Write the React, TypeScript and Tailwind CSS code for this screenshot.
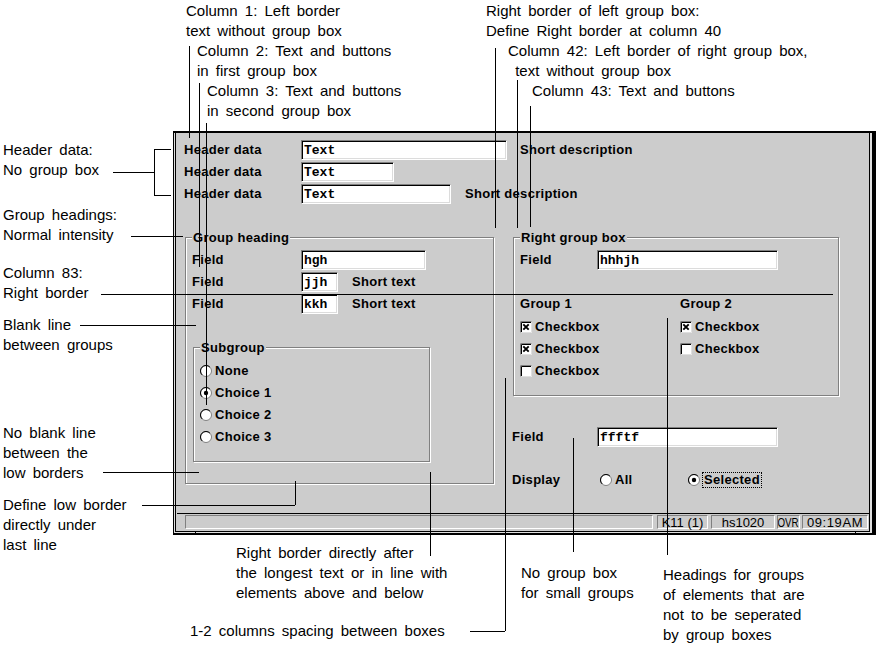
import type { ReactNode } from 'react';

const dlgFont = "font-['Liberation_Sans',Arial,sans-serif] font-bold text-[13px] tracking-[0.3px] text-black";

const Field = ({ w, value }: { w: string; value: string }) => (
  <div
    className={`${w} h-[20px] shrink-0 bg-white border border-t-[#808080] border-l-[#808080] border-r-white border-b-white shadow-[inset_1px_1px_0_#000,inset_-1px_-1px_0_#dcdcdc] pl-[2px] flex items-center font-['Liberation_Mono',monospace] font-bold text-[13px] tracking-normal leading-none`}
  >
    {value}
  </div>
);

const Radio = ({ checked }: { checked?: boolean }) => (
  <svg width="12" height="12" viewBox="0 0 12 12" className="shrink-0">
    <circle cx="6" cy="6" r="5.5" fill="#fff" stroke="#808080" />
    <path d="M2.1 9.9A5.5 5.5 0 0 1 9.9 2.1" fill="none" stroke="#000" />
    {checked && <circle cx="6" cy="6" r="2.2" fill="#000" />}
  </svg>
);

const Check = ({ checked }: { checked?: boolean }) => (
  <svg width="12" height="12" viewBox="0 0 12 12" className="shrink-0">
    <rect x="0" y="0" width="12" height="12" fill="#fff" />
    <path d="M0.5 12V0.5H12" stroke="#808080" fill="none" />
    <path d="M1.5 11V1.5H11" stroke="#000" fill="none" />
    <path d="M11.5 0.5V11.5H0.5" stroke="#dfdfdf" fill="none" />
    {checked && <path d="M3.3 3.3L8.7 8.7M8.7 3.3L3.3 8.7" stroke="#000" strokeWidth="1.9" />}
  </svg>
);

const GroupBox = ({ title, className, children }: { title: string; className: string; children: ReactNode }) => (
  <div className={`relative shrink-0 border border-[#808080] shadow-[inset_1px_1px_0_#fff,1px_1px_0_#fff] ${className}`}>
    <span className="absolute -top-[8px] left-[6px] bg-[#cccccc] px-px leading-[16px]">{title}</span>
    {children}
  </div>
);

const Row = ({ children }: { children: ReactNode }) => <div className="h-[20px] flex items-center">{children}</div>;

const notes = [
  { pos: 'left-[186px] top-[1px]', lines: ['Column 1: Left border', 'text without group box'] },
  { pos: 'left-[197px] top-[41px]', lines: ['Column 2: Text and buttons', 'in first group box'] },
  { pos: 'left-[207px] top-[81px]', lines: ['Column 3: Text and buttons', 'in second group box'] },
  { pos: 'left-[486px] top-[1px]', lines: ['Right border of left group box:', 'Define Right border at column 40'] },
  { pos: 'left-[508px] top-[41px]', lines: ['Column 42: Left border of right group box,', '\u00a0text without group box'] },
  { pos: 'left-[532px] top-[81px]', lines: ['Column 43: Text and buttons'] },
  { pos: 'left-[3px] top-[140px]', lines: ['Header data:', 'No group box'] },
  { pos: 'left-[3px] top-[205px]', lines: ['Group headings:', 'Normal intensity'] },
  { pos: 'left-[3px] top-[263px]', lines: ['Column 83:', 'Right border'] },
  { pos: 'left-[3px] top-[315px]', lines: ['Blank line', 'between groups'] },
  { pos: 'left-[3px] top-[423px]', lines: ['No blank line', 'between the', 'low borders'] },
  { pos: 'left-[3px] top-[495px]', lines: ['Define low border', 'directly under', 'last line'] },
  { pos: 'left-[236px] top-[543px]', lines: ['Right border directly after', 'the longest text or in line with', 'elements above and below'] },
  { pos: 'left-[190px] top-[621px]', lines: ['1-2 columns spacing between boxes'] },
  { pos: 'left-[521px] top-[563px]', lines: ['No group box', 'for small groups'] },
  { pos: 'left-[663px] top-[565px]', lines: ['Headings for groups', 'of elements that are', 'not to be seperated', 'by group boxes'] },
];

// pointer lines of the diagram: [x, y1, y2] and [y, x1, x2]
const vLines = [
  [189, 46, 138], [199, 83, 267], [206, 123, 405], [495, 48, 228], [517, 80, 228], [530, 106, 227],
  [154, 149, 195], [295, 481, 505], [430, 472, 556], [505, 378, 631], [573, 438, 552], [667, 318, 555],
  [195, 531, 534], [855, 531, 534],
];
const hLines = [
  [172, 113, 154], [149, 154, 171], [195, 154, 171], [236, 131, 183], [294, 101, 833],
  [325, 80, 196], [472, 103, 199], [505, 142, 295], [631, 470, 505],
];

const sunken = 'border border-t-[#808080] border-l-[#808080] border-r-white border-b-white';

export default function App() {
  return (
    <div className="relative w-[876px] h-[645px] overflow-hidden bg-white">
      <div className="pl-[173px] pt-[131px]">
        <div className="w-[703px] h-[404px] flex border-l border-t-2 border-r-4 border-b-2 border-black bg-[#dfdfdf] pl-px pr-[2px] pb-px">
          <div className={`flex-1 flex flex-col border-l border-r border-b border-black bg-[#cccccc] pl-px ${dlgFont}`}>
            <div className="flex-1 flex flex-col">
              <div className="pt-[7px] pl-[7px] flex flex-col gap-[2px]">
                <Row>
                  <span className="w-[117px]">Header data</span>
                  <Field w="w-[206px]" value="Text" />
                  <span className="ml-[13px]">Short description</span>
                </Row>
                <Row>
                  <span className="w-[117px]">Header data</span>
                  <Field w="w-[93px]" value="Text" />
                </Row>
                <Row>
                  <span className="w-[117px]">Header data</span>
                  <Field w="w-[150px]" value="Text" />
                  <span className="ml-[14px]">Short description</span>
                </Row>
              </div>

              <div className="mt-[33px] pl-[8px] flex items-start gap-[19px]">
                <GroupBox title="Group heading" className="w-[309px] h-[247px]">
                  <div className="pt-[12px] pl-[6px] flex flex-col gap-[2px]">
                    <Row>
                      <span className="w-[109px]">Field</span>
                      <Field w="w-[125px]" value="hgh" />
                    </Row>
                    <Row>
                      <span className="w-[109px]">Field</span>
                      <Field w="w-[37px]" value="jjh" />
                      <span className="ml-[14px]">Short text</span>
                    </Row>
                    <Row>
                      <span className="w-[109px]">Field</span>
                      <Field w="w-[37px]" value="kkh" />
                      <span className="ml-[14px]">Short text</span>
                    </Row>
                  </div>
                  <GroupBox title="Subgroup" className="mt-[33px] ml-[7px] w-[237px] h-[115px]">
                    <div className="pt-[13px] pl-[6px] flex flex-col gap-[2px]">
                      {['None', 'Choice 1', 'Choice 2', 'Choice 3'].map((c) => (
                        <Row key={c}>
                          <Radio checked={c === 'Choice 1'} />
                          <span className="ml-[3px]">{c}</span>
                        </Row>
                      ))}
                    </div>
                  </GroupBox>
                </GroupBox>

                <div className="flex flex-col">
                  <GroupBox title="Right group box" className="w-[326px] h-[159px]">
                    <div className="pt-[12px] pl-[6px]">
                      <Row>
                        <span className="w-[77px]">Field</span>
                        <Field w="w-[181px]" value="hhhjh" />
                      </Row>
                      <div className="mt-[24px] flex">
                        <div className="w-[160px] flex flex-col gap-[2px]">
                          <div className="h-[20px] mb-px flex items-center">Group 1</div>
                          <Row><Check checked /><span className="ml-[3px]">Checkbox</span></Row>
                          <Row><Check checked /><span className="ml-[3px]">Checkbox</span></Row>
                          <Row><Check /><span className="ml-[3px]">Checkbox</span></Row>
                        </div>
                        <div className="flex flex-col gap-[2px]">
                          <div className="h-[20px] mb-px flex items-center">Group 2</div>
                          <Row><Check checked /><span className="ml-[3px]">Checkbox</span></Row>
                          <Row><Check /><span className="ml-[3px]">Checkbox</span></Row>
                        </div>
                      </div>
                    </div>
                  </GroupBox>
                  <div className="mt-[31px] -ml-px h-[20px] flex items-center">
                    <span className="w-[85px]">Field</span>
                    <Field w="w-[181px]" value="ffftf" />
                  </div>
                  <div className="mt-[23px] -ml-px h-[20px] flex items-center">
                    <span className="w-[88px]">Display</span>
                    <div className="w-[88px] flex items-center">
                      <Radio />
                      <span className="ml-[3px]">All</span>
                    </div>
                    <div className="flex items-center">
                      <Radio checked />
                      <span className="ml-[2px] border border-dotted border-black px-px leading-[14px]">Selected</span>
                    </div>
                  </div>
                </div>
              </div>
            </div>

            <div className="h-[18px] border-t border-black pt-px pb-[2px] pl-[8px] pr-px flex font-normal tracking-normal text-[13px] leading-none">
              <div className={`flex-1 ${sunken}`} />
              <div className={`ml-[4px] w-[51px] flex items-center justify-center ${sunken}`}>K11 (1)</div>
              <div className={`ml-[3px] w-[64px] flex items-center justify-center ${sunken}`}>hs1020</div>
              <div className={`ml-[2px] w-[23px] flex items-center justify-center overflow-hidden ${sunken}`}>
                <span className="inline-block scale-x-[0.75]">OVR</span>
              </div>
              <div className={`ml-[2px] w-[66px] flex items-center justify-center tracking-[0.6px] ${sunken}`}>09:19AM</div>
            </div>
          </div>
        </div>
      </div>

      <svg className="absolute inset-0 pointer-events-none" width="876" height="645" shapeRendering="crispEdges">
        {vLines.map(([x, y1, y2], i) => (
          <line key={`v${i}`} x1={x + 0.5} y1={y1} x2={x + 0.5} y2={y2} stroke="#000" />
        ))}
        {hLines.map(([y, x1, x2], i) => (
          <line key={`h${i}`} x1={x1} y1={y + 0.5} x2={x2} y2={y + 0.5} stroke="#000" />
        ))}
      </svg>

      {notes.map((n) => (
        <div
          key={n.lines[0]}
          className={`absolute ${n.pos} whitespace-pre font-['Liberation_Sans',Arial,sans-serif] text-[15px] leading-[20px] [word-spacing:3px] text-black`}
        >
          {n.lines.map((l) => (
            <div key={l}>{l}</div>
          ))}
        </div>
      ))}
    </div>
  );
}
